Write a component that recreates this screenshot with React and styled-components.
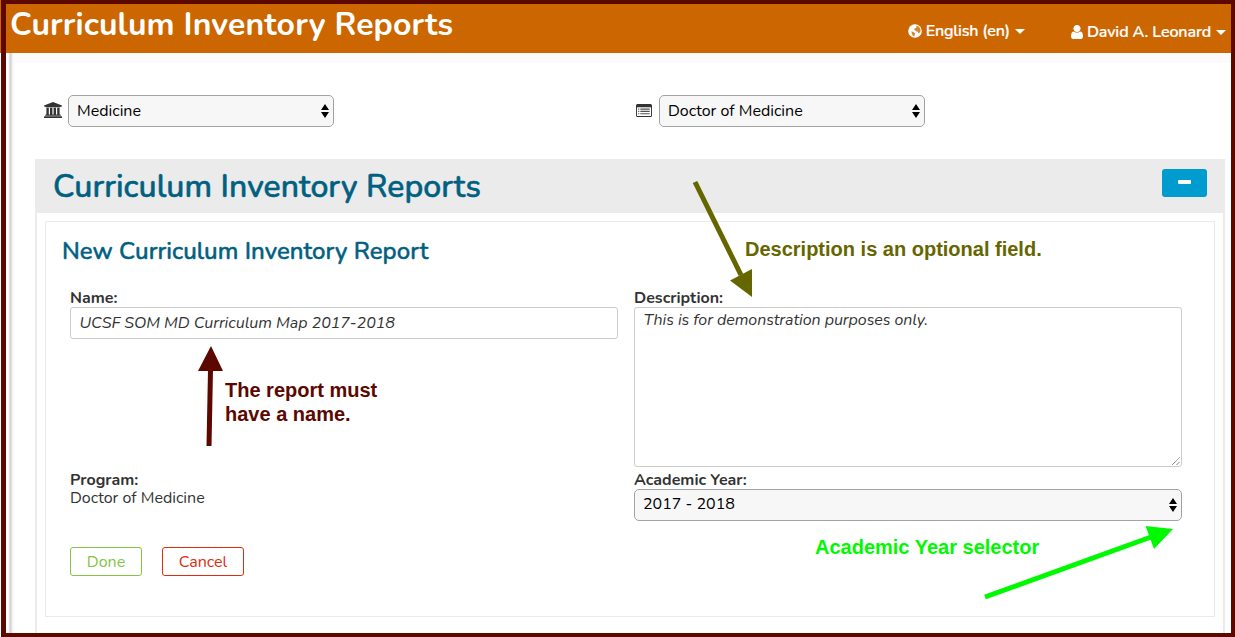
import React from 'react';
import styled, { createGlobalStyle } from 'styled-components';

const GlobalStyle = createGlobalStyle`
  *, *::before, *::after { box-sizing: border-box; }
  body { margin: 0; background: #fff; font-family: Nunito, Lato, sans-serif; font-size: 16px; color: #333; }
  h1, h2, h3, p { margin: 0; }
`;

const Page = styled.div`
  position: relative;
  width: 1235px;
  height: 637px;
  overflow: hidden;
  display: flex;
  flex-direction: column;
  background: #fff;
`;

const Frame = styled.div`
  position: absolute;
  inset: 0 0 0 1px;
  border: solid #5c0700;
  border-width: 4px 4px 4px 5px;
  pointer-events: none;
`;

const Header = styled.header`
  height: 53px;
  flex: none;
  background: #cc6600;
  color: #fff;
  display: flex;
  align-items: flex-start;
  padding: 4px 9px 0 10px;
`;

const Text = styled.span`
  display: block;
  letter-spacing: ${(p) => p.$ls || 0}px;
  white-space: nowrap;
`;

const PageTitle = styled.h1`
  flex: 1;
  font-size: 32px;
  line-height: 41px;
  font-weight: 700;
`;

const MenuButton = styled.div`
  display: flex;
  align-items: center;
  height: 20px;
  margin-top: ${(p) => p.$top}px;
  margin-left: ${(p) => p.$left || 0}px;
  font-weight: 600;
  font-size: 16px;
  line-height: 20px;
  -webkit-text-stroke: 0.2px #fff;
`;

const MenuLabel = styled(Text)`
  margin: 0 5px 0 4px;
`;

const Caret = styled.i`
  margin-top: 1px;
  border: 5px solid transparent;
  border-top-color: #fff;
  border-bottom: 0;
`;

const Body = styled.div`
  flex: 1;
  display: flex;
  min-height: 0;
`;

const Sidebar = styled.aside`
  width: 15px;
  flex: none;
  background: linear-gradient(to right, #fff 8px, #f0f0f0 9px, #d2d2d2 10px, #d6d6d6 11px, #ededed 12px, #f7f7f7 13px, #fff 15px);
`;

const Main = styled.main`
  flex: 1;
  border-top: 10px solid #fbfbfb;
  padding: 32px 11px 0 20px;
  display: flex;
  flex-direction: column;
`;

const Filters = styled.div`
  display: flex;
  height: 32px;
  padding-left: 9px;
  margin-bottom: 32px;
`;

const Filter = styled.div`
  display: flex;
  align-items: center;
  width: ${(p) => p.$width}px;
`;

const IconSlot = styled.span`
  display: flex;
  width: 24px;
  padding: 0 0 2px ${(p) => p.$left || 0}px;
`;

const Select = styled.div`
  display: flex;
  align-items: center;
  justify-content: space-between;
  width: ${(p) => p.$width};
  height: 32px;
  padding: 0 4px 0 8px;
  border: 1px solid #a3a3a3;
  border-radius: 5px;
  background: #f7f7f7;
  color: #000;
  line-height: 20px;
`;

const YearSelect = styled(Select)`
  & > span { padding-bottom: 2px; }
`;

const Panel = styled.section`
  flex: 1;
  border: 2px solid #ebebeb;
  border-width: 0 2px;
`;

const PanelHeader = styled.div`
  display: flex;
  justify-content: space-between;
  align-items: flex-start;
  height: 54px;
  margin: 0 -2px;
  padding: 10px 18px 0;
  background: #ebebeb;
`;

const PanelTitle = styled.h2`
  font-size: 32px;
  font-weight: 500;
  line-height: 36px;
  color: #006080;
  -webkit-text-stroke: 0.6px #006080;
`;

const CollapseButton = styled.div`
  width: 45px;
  height: 28px;
  border-radius: 3px;
  background: #009ccf;
  display: flex;
  justify-content: center;
  padding-top: 11px;
  &::before {
    content: '';
    width: 13px;
    height: 4px;
    border-radius: 1px;
    background: #fff;
  }
`;

const Card = styled.div`
  margin: 8px;
  height: 396px;
  border: 1px solid #ebebeb;
  padding: 14px 32px 0 24px;
`;

const CardTitle = styled.h3`
  margin-left: -8px;
  font-size: 24px;
  line-height: 31px;
  font-weight: 500;
  color: #006080;
  -webkit-text-stroke: 0.5px #006080;
`;

const FormGrid = styled.div`
  display: grid;
  grid-template-columns: 548px 548px;
  column-gap: 16px;
  grid-template-rows: 182px 50px;
  margin-top: 22px;
`;

const Field = styled.div`
  display: flex;
  flex-direction: column;
`;

const Label = styled.div`
  height: 18px;
  line-height: 18px;
  font-weight: 700;
`;

const Value = styled.div`
  height: 18px;
  line-height: 18px;
`;

const InputBox = styled.div`
  display: flex;
  justify-content: space-between;
  height: ${(p) => p.$height}px;
  padding: ${(p) => p.$pad}px 1px 1px 8.500px;
  border: 1px solid #ccc;
  border-radius: 3px;
  line-height: 20px;
  font-style: italic;
`;

const Grip = styled.svg`
  align-self: flex-end;
`;

const Actions = styled.div`
  display: flex;
  gap: 20px;
  margin-top: 26px;
`;

const Button = styled.div`
  width: ${(p) => p.$width}px;
  height: 29px;
  border: 1px solid ${(p) => p.$color};
  border-radius: 3px;
  color: ${(p) => p.$color};
  line-height: 28px;
  text-align: center;
`;

const Arrows = styled.svg`
  position: absolute;
  inset: 0;
  pointer-events: none;
`;

const Note = styled.p`
  position: absolute;
  left: ${(p) => p.$x}px;
  top: ${(p) => p.$y}px;
  color: ${(p) => p.$color};
  font: 700 20px/24px 'Liberation Sans', sans-serif;
  white-space: nowrap;
`;

const Updown = () => (
  <svg width="8" height="16" viewBox="0 0 8 16">
    <path d="M4 1l4 6H0zM4 15l4-6H0z" />
  </svg>
);

const GlobeIcon = () => (
  <svg width="14" height="14" viewBox="0 0 14 14">
    <circle cx="7" cy="7" r="6.800" fill="#fff" />
    <path d="M8.600 1.600L11.300 3L12.500 5.500L12.300 8L10.800 9.600L9.800 7.800L8 7.200L6.600 5.800L5.800 4.800L7.400 4.200L8.400 3.200ZM3.300 7.200L5.400 8L7.200 9.400L6.600 11L6.300 12.400L4.400 11.200Z" fill="#cc6600" fillOpacity=".8" />
  </svg>
);

const UserIcon = () => (
  <svg width="12" height="14" viewBox="256 128 1280 1536" fill="#fff" preserveAspectRatio="none">
    <path d="M1536 1399q0 109-62.500 187t-150.500 78h-854q-88 0-150.500-78t-62.500-187q0-85 8.500-160.500t31.500-152 58.500-131 94-89 134.500-34.500q131 128 313 128t313-128q76 0 134.500 34.500t94 89 58.500 131 31.500 152 8.500 160.500zm-256-887q0 159-112.500 271.500t-271.500 112.500-271.500-112.500-112.500-271.500 112.500-271.500 271.500-112.500 271.500 112.500 112.500 271.500z" />
  </svg>
);

const UniversityIcon = () => (
  <svg width="18" height="16" viewBox="0 0 1920 1792" fill="#333" preserveAspectRatio="none">
    <path d="M960 0l960 384v128h-128q0 26-20.500 45t-48.500 19h-1526q-28 0-48.500-19t-20.500-45h-128v-128zM256 640h256v768h128v-768h256v768h128v-768h256v768h128v-768h256v768h59q28 0 48.500 19t20.500 45v64h-1664v-64q0-26 20.500-45t48.500-19h59zM1851 1600q28 0 48.500 19t20.500 45v128h-1920v-128q0-26 20.500-45t48.500-19z" />
  </svg>
);

const ListIcon = () => (
  <svg width="16" height="13" viewBox="0 0 17 13" fill="#333" preserveAspectRatio="none">
    <path fillRule="evenodd" d="M1.500 0h14A1.500 1.500 0 0 1 17 1.500v10a1.500 1.500 0 0 1-1.500 1.500h-14A1.500 1.500 0 0 1 0 11.500v-10A1.500 1.500 0 0 1 1.500 0zM1.500 3.200a.5.5 0 0 0-.5.5v7.800a.5.5 0 0 0 .5.5h14a.5.5 0 0 0 .5-.5V3.700a.5.5 0 0 0-.5-.5z" />
    <path opacity=".85" d="M2.300 4.500h1.200v1.200H2.300zM4.600 4.500h10v1.200h-10zM2.300 6.800h1.200V8H2.300zM4.600 6.800h10V8h-10zM2.300 9.200h1.200v1.100H2.300zM4.600 9.200h10v1.100h-10z" />
  </svg>
);

export default function App() {
  return (
    <Page>
      <GlobalStyle />
      <Header>
        <PageTitle><Text $ls={0.12}>Curriculum Inventory Reports</Text></PageTitle>
        <MenuButton $top={17}>
          <GlobeIcon />
          <MenuLabel $ls={-0.2}>English (en)</MenuLabel>
          <Caret />
        </MenuButton>
        <MenuButton $top={18} $left={46}>
          <UserIcon />
          <MenuLabel $ls={-0.12}>David A. Leonard</MenuLabel>
          <Caret />
        </MenuButton>
      </Header>
      <Body>
        <Sidebar />
        <Main>
          <Filters>
            <Filter $width={591}>
              <IconSlot><UniversityIcon /></IconSlot>
              <Select $width="266px"><Text>Medicine</Text><Updown /></Select>
            </Filter>
            <Filter>
              <IconSlot $left={1}><ListIcon /></IconSlot>
              <Select $width="266px"><Text>Doctor of Medicine</Text><Updown /></Select>
            </Filter>
          </Filters>
          <Panel>
            <PanelHeader>
              <PanelTitle><Text $ls={0.06}>Curriculum Inventory Reports</Text></PanelTitle>
              <CollapseButton />
            </PanelHeader>
            <Card>
              <CardTitle><Text $ls={0.04}>New Curriculum Inventory Report</Text></CardTitle>
              <FormGrid>
                <Field>
                  <Label><Text>Name:</Text></Label>
                  <InputBox $height={32} $pad={5}><Text $ls={-0.03}>UCSF SOM MD Curriculum Map 2017-2018</Text></InputBox>
                </Field>
                <Field>
                  <Label><Text>Description:</Text></Label>
                  <InputBox $height={160} $pad={2}>
                    <Text $ls={-0.05}>This is for demonstration purposes only.</Text>
                    <Grip width="8" height="8" viewBox="0 0 8 8" stroke="#555" strokeDasharray="1 .6"><path d="M0 8L8 0M4.500 8L8 4.500" /></Grip>
                  </InputBox>
                </Field>
                <Field>
                  <Label><Text>Program:</Text></Label>
                  <Value><Text>Doctor of Medicine</Text></Value>
                </Field>
                <Field>
                  <Label><Text>Academic Year:</Text></Label>
                  <YearSelect $width="100%"><Text>2017 - 2018</Text><Updown /></YearSelect>
                </Field>
              </FormGrid>
              <Actions>
                <Button $width={72} $color="#84c444"><Text>Done</Text></Button>
                <Button $width={82} $color="#dd2c0e"><Text>Cancel</Text></Button>
              </Actions>
            </Card>
          </Panel>
        </Main>
      </Body>
      <Frame />
      <Arrows width="1235" height="637" viewBox="0 0 1235 637">
        <path d="M209 446L210.500 370" stroke="#5c0700" strokeWidth="5" />
        <path d="M211 346L223 371H198z" fill="#5c0700" />
        <path d="M695 182L741 275" stroke="#666600" strokeWidth="5" />
        <path d="M752 297V269L730 280.500z" fill="#666600" />
        <path d="M985 597L1151 537" stroke="#00f900" strokeWidth="5" />
        <path d="M1173 529L1145.500 526L1154 549z" fill="#00f900" />
      </Arrows>
      <Note $x={225} $y={378} $color="#5c0700">The report must<br />have a name.</Note>
      <Note $x={745} $y={237} $color="#666600">Description is an optional field.</Note>
      <Note $x={815} $y={535} $color="#00f900">Academic Year selector</Note>
    </Page>
  );
}
